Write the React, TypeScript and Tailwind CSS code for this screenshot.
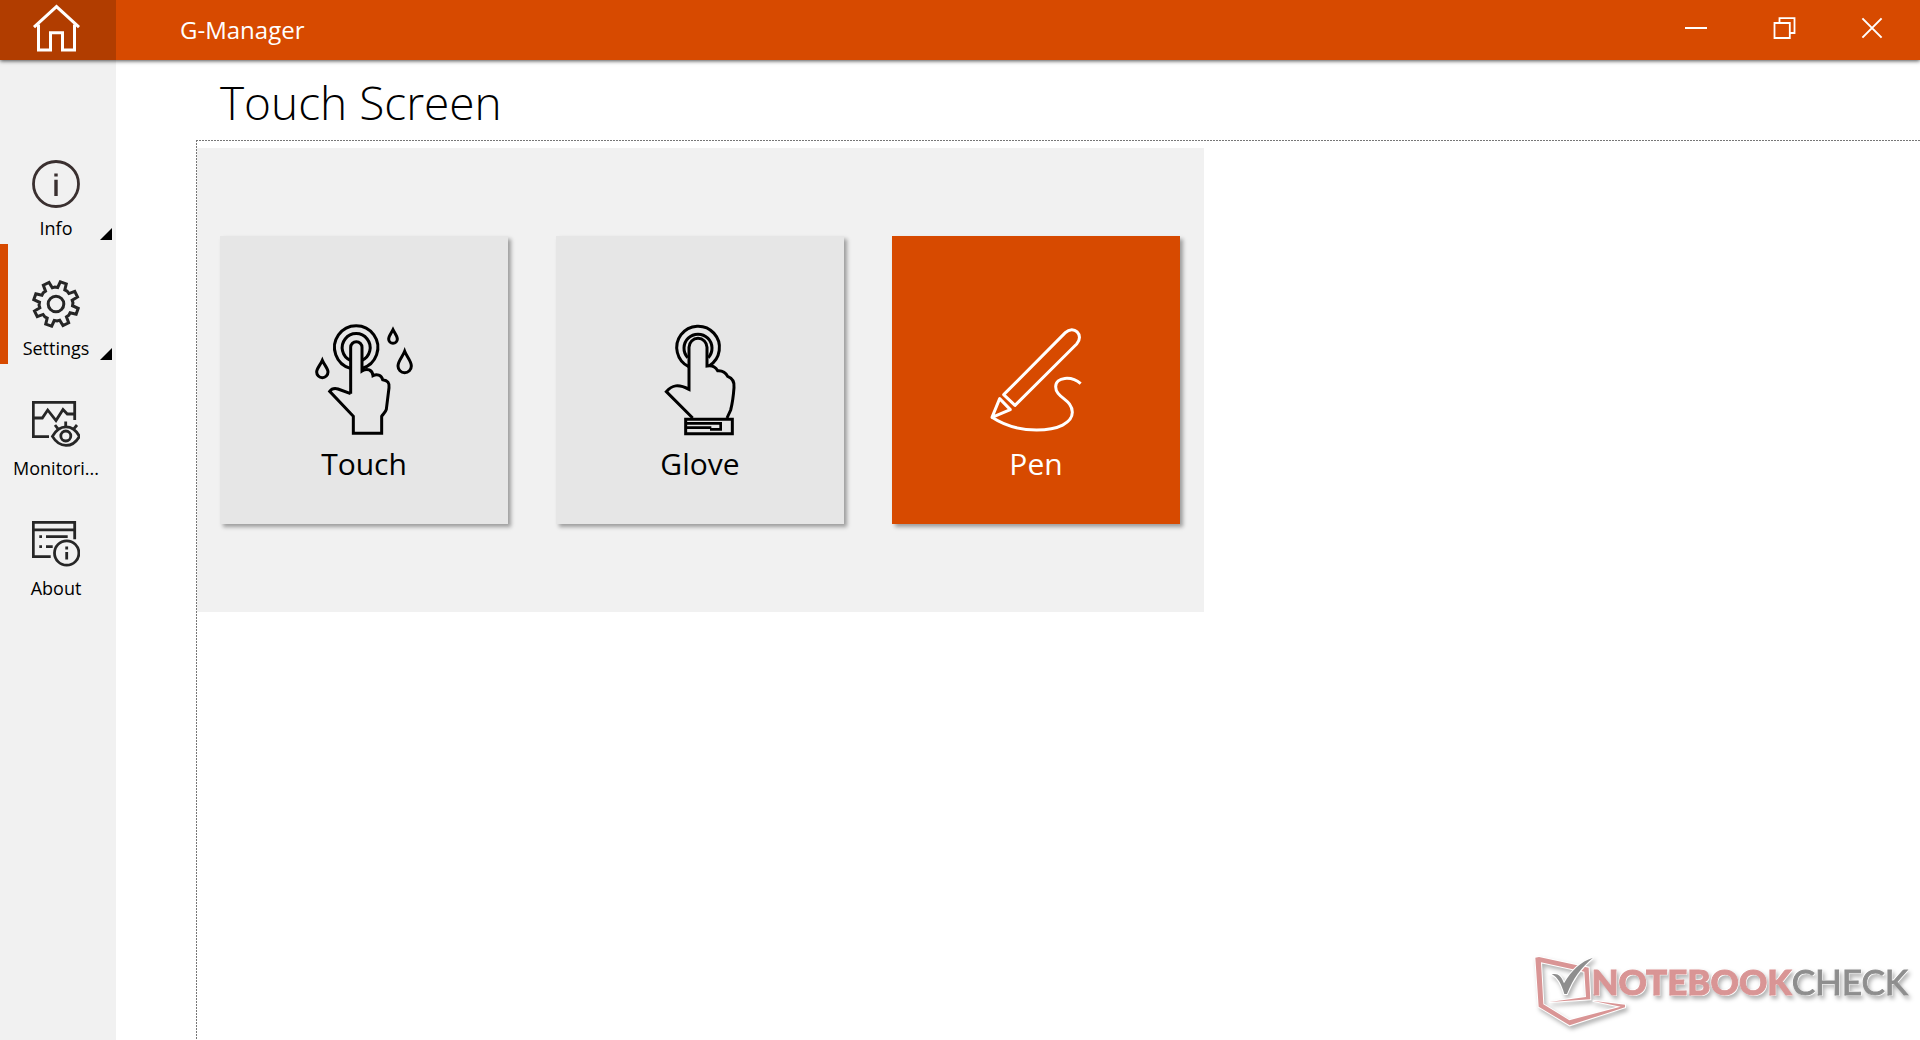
import { useState } from "react";
import type { ReactNode } from "react";

type NavItem = {
  id: string;
  label: string;
  icon: ReactNode;
  hasMenu?: boolean;
};

type ModeItem = {
  id: string;
  label: string;
  icon: ReactNode;
};

// Outline of the settings cog: eight teeth around a 48px box.
function gearPath(): string {
  const points: string[] = [];
  const add = (radius: number, degrees: number) => {
    const a = (degrees * Math.PI) / 180;
    points.push(`${(24 + radius * Math.cos(a)).toFixed(2)} ${(24 + radius * Math.sin(a)).toFixed(2)}`);
  };
  for (let i = 0; i < 8; i++) {
    const mid = -71 + i * 45;
    add(16.6, mid - 13);
    add(22.6, mid - 8);
    add(22.6, mid + 8);
    add(16.6, mid + 13);
    add(17, mid + 22);
  }
  return `M${points.join("L")}Z`;
}

function HomeIcon() {
  return (
    <svg viewBox="32 4 48 48" className="size-12" fill="none" stroke="currentColor" strokeWidth="3" aria-hidden="true">
      <path d="M34 27.2 56.5 6.6 79 27.2" />
      <path d="M38.5 24.5V50h12V32.8h12V50h12V24.5" />
    </svg>
  );
}

function InfoIcon() {
  return (
    <svg viewBox="0 0 48 48" className="size-12 text-[#3a3030]" fill="none" stroke="currentColor" strokeWidth="2.8" aria-hidden="true">
      <circle cx="24" cy="24" r="22.5" />
      <path d="M24 13.4v3M24 19.8V36" strokeWidth="3.4" />
    </svg>
  );
}

function GearIcon() {
  return (
    <svg viewBox="0 0 48 48" className="size-12 text-[#262626]" fill="none" stroke="currentColor" strokeWidth="3" aria-hidden="true">
      <path d={gearPath()} />
      <circle cx="24" cy="24" r="7.8" />
    </svg>
  );
}

function MonitorIcon() {
  return (
    <svg viewBox="0 0 48 48" className="size-12 text-[#262626]" fill="none" stroke="currentColor" strokeWidth="2.8" aria-hidden="true">
      <path d="M17 36.7H1.3V2.3h41.4V20" />
      <path d="M1.3 18h9l5.4-8L24 20.5l7-11 4.3 4.5h7.4" />
      <path d="M20.4 36.4C24 30 28.6 26.9 34 26.9S44 30 47.4 36.4C44 42.4 39.4 45.4 34 45.4s-10-3-13.6-9Z" />
      <circle cx="33.8" cy="36" r="5" />
      <path d="m23 25 2.8 3.6M33.7 21.6v5M45 25l-3 3.6" />
    </svg>
  );
}

function AboutIcon() {
  return (
    <svg viewBox="0 0 48 48" className="size-12 text-[#262626]" fill="none" stroke="currentColor" strokeWidth="2.8" aria-hidden="true">
      <path d="M18.7 36.7H1.3V2.3h41.4v17" />
      <path d="M1.3 9.8h41.4" />
      <path d="M7.3 16.7H10M14 16.7h21.7M7.3 26.7H10M14 26.7h6.7" />
      <circle cx="34.7" cy="33" r="12.2" />
      <path d="M34.7 26.6v2.8M34.7 32v7.6" />
    </svg>
  );
}

function TouchIcon() {
  return (
    <svg viewBox="36 42 312 336" className="h-28 w-26" fill="none" stroke="currentColor" strokeWidth="9" aria-hidden="true">
      <path d="M151 175a65 65 0 1 1 35 0" />
      <path d="M151 151a42 42 0 1 1 35 0" />
      <path d="M152 251V112a17 17 0 0 1 34 0v71C202 173 217 180 219 197c12-6 25-2 29 12 15 2 21 10 19 24l-8 65c-2 8-10 14-14 21v51h-85v-51L89 244c6-8 14-10 25-7l38 14" />
      <path d="M67 151c-6 14-17 24-17 35a17 17 0 0 0 34 0c0-11-11-21-17-35Z" />
      <path d="M279 59c-5 10-13 19-13 28a13 13 0 0 0 26 0c0-9-8-18-13-28Z" />
      <path d="M314 124c-6 16-20 29-20 44a20 20 0 0 0 40 0c0-15-14-28-20-44Z" />
    </svg>
  );
}

function GloveIcon() {
  return (
    <svg viewBox="-6 42 312 336" className="h-28 w-26" fill="none" stroke="currentColor" strokeWidth="9" aria-hidden="true">
      <path d="M116 170a64 64 0 1 1 62-3" />
      <path d="M113 143a42 42 0 1 1 62 0" />
      <path d="M128 324 49 245c17-20 36-24 68-7V112a27 27 0 0 1 54 0v56c14-3 25 2 32 14 14-1 24 5 30 17 16 6 21 17 19 34-2 28-4 44-10 67l-11 24" />
      <path d="M107 328h140v43H107z" />
      <path d="M109 340h103v18h-32M109 353h75" strokeWidth="8" />
    </svg>
  );
}

function PenIcon() {
  return (
    <svg viewBox="42 42 312 336" className="h-28 w-26" fill="none" stroke="currentColor" strokeWidth="9" strokeLinejoin="round" aria-hidden="true">
      <path d="M101 254 286 68c25-25 58 7 34 34L135 286Z" />
      <path d="m89 266-23 56 55-23Z" />
      <path d="M66 322c42 28 87 38 134 38 65 0 107-22 107-53 0-40-50-43-50-77 0-30 48-33 75-9" />
    </svg>
  );
}

const navItems: NavItem[] = [
  { id: "info", label: "Info", icon: <InfoIcon />, hasMenu: true },
  { id: "settings", label: "Settings", icon: <GearIcon />, hasMenu: true },
  { id: "monitoring", label: "Monitori...", icon: <MonitorIcon /> },
  { id: "about", label: "About", icon: <AboutIcon /> },
];

const modes: ModeItem[] = [
  { id: "touch", label: "Touch", icon: <TouchIcon /> },
  { id: "glove", label: "Glove", icon: <GloveIcon /> },
  { id: "pen", label: "Pen", icon: <PenIcon /> },
];

function TitleBar() {
  const control = "flex h-14 w-[88px] items-center justify-center hover:bg-white/10";
  return (
    <header className="relative z-10 flex h-[60px] bg-[#d74a00] text-white shadow-[0_1px_4px_rgba(0,0,0,0.7)]">
      <button type="button" aria-label="Home" className="flex w-[116px] items-start bg-[#b13d00] pt-1 pl-8">
        <HomeIcon />
      </button>
      <h1 className="flex flex-1 items-center pl-16 text-2xl">G-Manager</h1>
      <div className="flex pr-1">
        <button type="button" aria-label="Minimize" className={control}>
          <svg viewBox="0 0 24 24" className="size-6" fill="none" stroke="currentColor" strokeWidth="2" aria-hidden="true">
            <path d="M1 12h22" />
          </svg>
        </button>
        <button type="button" aria-label="Restore" className={control}>
          <svg viewBox="0 0 24 24" className="size-6" fill="none" stroke="currentColor" strokeWidth="1.8" aria-hidden="true">
            <path d="M2.5 7h15.3v15H2.5zM7.5 7V2.2h15V17h-4.7" />
          </svg>
        </button>
        <button type="button" aria-label="Close" className={control}>
          <svg viewBox="0 0 24 24" className="size-6" fill="none" stroke="currentColor" strokeWidth="2" aria-hidden="true">
            <path d="m2.4 2.4 19.2 19.2M21.6 2.4 2.4 21.6" />
          </svg>
        </button>
      </div>
    </header>
  );
}

function Sidebar() {
  const [active, setActive] = useState("settings");
  return (
    <nav className="w-[116px] shrink-0 bg-[#f1f1f1] pt-16">
      {navItems.map((item) => (
        <button
          key={item.id}
          type="button"
          onClick={() => setActive(item.id)}
          className="relative flex h-30 w-full flex-col items-center gap-2 pt-9 pr-1"
        >
          {active === item.id ? <span className="absolute inset-y-0 left-0 w-2 bg-[#d74a00]" /> : null}
          {item.icon}
          <span className="text-lg leading-6">{item.label}</span>
          {item.hasMenu ? (
            <svg viewBox="0 0 12 12" className="absolute right-1 bottom-1 size-3" aria-hidden="true">
              <path d="M12 0v12H0z" />
            </svg>
          ) : null}
        </button>
      ))}
    </nav>
  );
}

function Watermark() {
  return (
    <div className="absolute right-3 bottom-3 flex items-start drop-shadow-[2px_3px_2px_rgba(0,0,0,0.3)]">
      <svg viewBox="36 30 282 219" className="h-[73px] w-[94px]" aria-hidden="true">
        <path
          fill="#d99595"
          stroke="#fff"
          strokeWidth="6"
          paintOrder="stroke"
          d="M43 38 54 36 203 68 208 163 85 171 195 156 190 80 60 52 67 178 145 226 299 185 215 167 312 179V187L146 241 53 185Z"
        />
        <path
          fill="#8e8e8e"
          stroke="#fff"
          strokeWidth="6"
          paintOrder="stroke"
          d="M92 88c18-4 28 3 37 27 22-38 50-66 87-77-36 30-60 62-78 109h-8c-8-27-18-50-38-59Z"
        />
      </svg>
      <p className="-ml-9 pt-1.5 font-['Lato'] text-[35px] leading-10 [text-shadow:1px_1px_0_#fff,-1px_-1px_0_#fff]">
        <span className="font-black text-[#d99595] [-webkit-text-stroke:1px_#d99595]">NOTEBOOK</span>
        <span className="text-[#8e8e8e] [-webkit-text-stroke:1px_#8e8e8e]">CHECK</span>
      </p>
    </div>
  );
}

export default function App() {
  const [mode, setMode] = useState("pen");

  return (
    <div className="relative flex min-h-screen flex-col bg-white font-['Open_Sans',sans-serif] text-black">
      <TitleBar />
      <div className="flex flex-1">
        <Sidebar />
        <main className="flex flex-1 flex-col pl-20">
          <h2 className="pt-3 pb-2 pl-6 text-[46px] leading-[60px] font-light">Touch Screen</h2>
          <section className="flex-1 bg-[repeating-linear-gradient(90deg,#777_0_2px,transparent_2px_3px),repeating-linear-gradient(#777_0_2px,transparent_2px_3px)] bg-[length:100%_1px,1px_100%] bg-no-repeat pt-2 pl-px">
            <div className="flex w-fit gap-12 bg-[#f1f1f1] py-22 pr-6 pl-[23px]">
              {modes.map((item) => (
                <button
                  key={item.id}
                  type="button"
                  aria-pressed={mode === item.id}
                  onClick={() => setMode(item.id)}
                  className={`flex size-72 flex-col items-center gap-2 pt-22 shadow-[3px_3px_4px_rgba(0,0,0,0.35)] ${
                    mode === item.id ? "bg-[#d74a00] text-white" : "bg-[#e6e6e6]"
                  }`}
                >
                  {item.icon}
                  <span className="text-3xl leading-10">{item.label}</span>
                </button>
              ))}
            </div>
          </section>
        </main>
      </div>
      <Watermark />
    </div>
  );
}
